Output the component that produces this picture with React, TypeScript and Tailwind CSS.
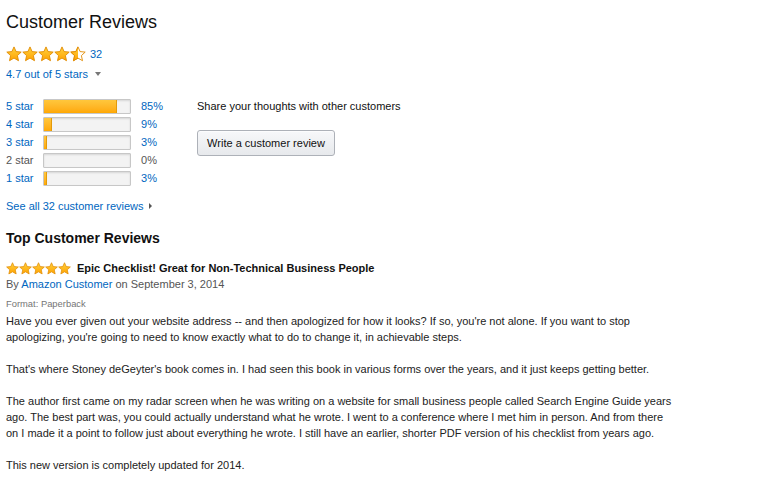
import React from 'react';

const bars = [
  { label: '5 star', pct: 85, active: true },
  { label: '4 star', pct: 9, active: true },
  { label: '3 star', pct: 3, active: true },
  { label: '2 star', pct: 0, active: false },
  { label: '1 star', pct: 3, active: true },
];

const StarPts = '8,0.9 10.1,5.6 15.2,6.1 11.4,9.6 12.5,14.7 8,12.1 3.5,14.7 4.6,9.6 0.8,6.1 5.9,5.6';

const Star: React.FC<{ size: number; fill: 'full' | 'half'; id: string }> = ({ size, fill, id }) => (
  <svg width={size} height={size} viewBox="0 0 16 16" className="block">
    <defs>
      <linearGradient id={`g-${id}`} x1="0" y1="0" x2="0" y2="1">
        <stop offset="0" stopColor="#ffd23f" />
        <stop offset="1" stopColor="#ffa200" />
      </linearGradient>
      <clipPath id={`c-${id}`}>
        <rect x="0" y="0" width="8" height="16" />
      </clipPath>
    </defs>
    {fill === 'full' ? (
      <polygon points={StarPts} fill={`url(#g-${id})`} stroke="#e08a00" strokeWidth="0.9" strokeLinejoin="round" />
    ) : (
      <>
        <polygon points={StarPts} fill="#fff" stroke="#e08a00" strokeWidth="0.9" strokeLinejoin="round" />
        <polygon points={StarPts} fill={`url(#g-${id})`} stroke="#e08a00" strokeWidth="0.9" strokeLinejoin="round" clipPath={`url(#c-${id})`} />
      </>
    )}
  </svg>
);

const App: React.FC = () => {
  return (
    <div className="min-h-[479px] bg-white px-[6px] pt-[11px] text-[#111] font-['Liberation_Sans',Arial,sans-serif]">
      <h1 className="text-[18px] leading-[22px] text-[#111]">Customer Reviews</h1>

      <div className="mt-[13px] flex items-center h-[16px]">
        {[0, 1, 2, 3].map((i) => (
          <Star key={i} size={16} fill="full" id={`top${i}`} />
        ))}
        <Star size={16} fill="half" id="top4" />
        <span className="ml-[4px] text-[11px] text-[#0066c0]">32</span>
      </div>

      <div className="mt-[4px] flex items-center h-[16px] text-[11px] text-[#0066c0]">
        <span>4.7 out of 5 stars</span>
        <span className="ml-[7px] w-0 h-0 border-l-[3px] border-r-[3px] border-t-[4px] border-l-transparent border-r-transparent border-t-[#777]" />
      </div>

      <div className="mt-[15px] flex">
        <div className="w-[185px]">
          {bars.map((b) => (
            <div key={b.label} className="flex items-center h-[18px] text-[11px]">
              <span className={`w-[37px] ${b.active ? 'text-[#0066c0]' : 'text-[#555]'}`}>{b.label}</span>
              <div className="w-[88px] h-[15px] border border-[#c7c7c7] bg-[#f3f3f3] rounded-[1px] shadow-[inset_0_1px_2px_rgba(0,0,0,0.12)] overflow-hidden">
                {b.pct > 0 && (
                  <div
                    className="h-full bg-gradient-to-b from-[#ffc73c] to-[#ffa800] border-r border-[#e39a0a]"
                    style={{ width: `${b.pct}%` }}
                  />
                )}
              </div>
              <span className={`ml-[10px] ${b.active ? 'text-[#0066c0]' : 'text-[#555]'}`}>{b.pct}%</span>
            </div>
          ))}
        </div>
        <div className="pl-[6px]">
          <div className="h-[18px] flex items-center text-[11px] text-[#111]">Share your thoughts with other customers</div>
          <button className="mt-[15px] w-[138px] h-[26px] rounded-[3px] border border-[#adb1b8] bg-gradient-to-b from-[#f7f8fa] to-[#e7e9ec] text-[11px] text-[#111] shadow-[0_1px_0_rgba(255,255,255,0.6)_inset]">
            Write a customer review
          </button>
        </div>
      </div>

      <div className="mt-[11px] flex items-center h-[16px] text-[11px] text-[#0066c0]">
        <span>See all 32 customer reviews</span>
        <span className="ml-[5px] w-0 h-0 border-t-[3px] border-b-[3px] border-l-[3px] border-t-transparent border-b-transparent border-l-[#555]" />
      </div>

      <h2 className="mt-[15px] text-[14px] leading-[18px] font-bold text-[#111]">Top Customer Reviews</h2>

      <div className="mt-[13px] flex items-center h-[16px]">
        <div className="flex">
          {[0, 1, 2, 3, 4].map((i) => (
            <Star key={i} size={13} fill="full" id={`rv${i}`} />
          ))}
        </div>
        <span className="ml-[6px] text-[11px] font-bold text-[#111]">Epic Checklist! Great for Non-Technical Business People</span>
      </div>

      <div className="h-[16px] leading-[16px] text-[11px] text-[#555]">
        By <span className="text-[#0066c0]">Amazon Customer</span> on September 3, 2014
      </div>

      <div className="mt-[5px] h-[14px] leading-[14px] text-[9.4px] text-[#767676]">Format: Paperback</div>

      <div className="mt-[2px] w-[668px] text-[11px] leading-[16px] text-[#222]">
        <p>
          Have you ever given out your website address -- and then apologized for how it looks? If so, you're not alone. If you want to stop apologizing, you're going to need to know exactly what to do to change it, in achievable steps.
        </p>
        <p className="mt-[16px]">
          That's where Stoney deGeyter's book comes in. I had seen this book in various forms over the years, and it just keeps getting better.
        </p>
        <p className="mt-[16px]">
          The author first came on my radar screen when he was writing on a website for small business people called Search Engine Guide years ago. The best part was, you could actually understand what he wrote. I went to a conference where I met him in person. And from there on I made it a point to follow just about everything he wrote. I still have an earlier, shorter PDF version of his checklist from years ago.
        </p>
        <p className="mt-[16px]">This new version is completely updated for 2014.</p>
      </div>
    </div>
  );
};

export default App;
